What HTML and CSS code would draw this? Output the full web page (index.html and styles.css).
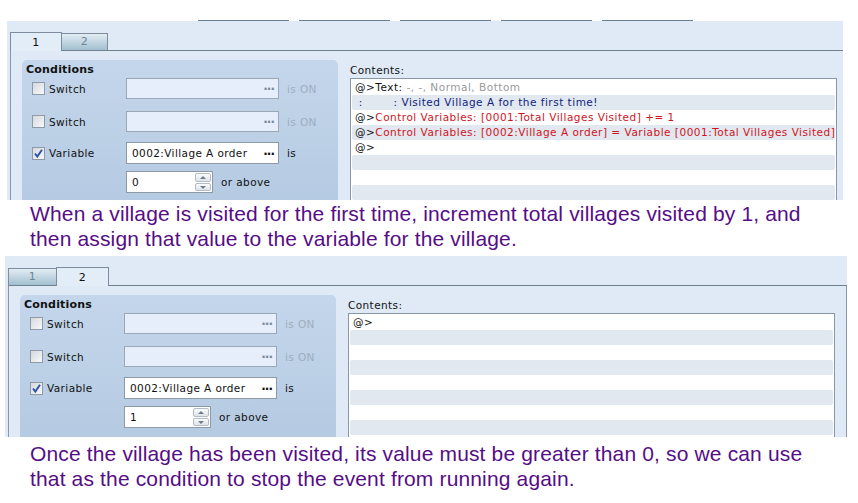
FILE: index.html
```html
<!DOCTYPE html>
<html lang="en">
<head>
    <meta charset="UTF-8">
    <meta name="viewport" content="width=device-width, initial-scale=1.0">
    <title>Village Visited Event</title>
    <link rel="stylesheet" href="styles.css">
</head>
<body>
    <div class="btn-strip">
        <span></span><span></span><span></span><span></span><span></span>
    </div>

    <section class="panel panel-one">
        <div class="tabs">
            <div class="tab active tab-wide">1</div>
            <div class="tab tab-narrow">2</div>
        </div>
        <div class="tab-body">
            <div class="conditions">
                <div class="cond-title">Conditions</div>
                <div class="cond-row row-a">
                    <span class="check"></span><span class="cond-label">Switch</span>
                    <div class="picker disabled"><span class="picker-text"></span><span class="dots">&middot;&middot;&middot;</span></div>
                    <span class="suffix muted">is ON</span>
                </div>
                <div class="cond-row row-b">
                    <span class="check"></span><span class="cond-label">Switch</span>
                    <div class="picker disabled"><span class="picker-text"></span><span class="dots">&middot;&middot;&middot;</span></div>
                    <span class="suffix muted">is ON</span>
                </div>
                <div class="cond-row row-c">
                    <span class="check checked"><svg width="11" height="11" viewBox="0 0 11 11"><path d="M2 5.5 L4.3 8.5 L9 1.8" fill="none" stroke="#2f55a8" stroke-width="2"/></svg></span><span class="cond-label">Variable</span>
                    <div class="picker"><span class="picker-text">0002:Village A order</span><span class="dots">&middot;&middot;&middot;</span></div>
                    <span class="suffix">is</span>
                </div>
                <div class="cond-row row-d">
                    <div class="spin">
                        <span class="spin-value">0</span>
                        <span class="spin-btns"><i class="up"></i><i class="down"></i></span>
                    </div>
                    <span class="suffix">or above</span>
                </div>
            </div>
            <div class="contents">
                <div class="contents-label">Contents:</div>
                <div class="event-list">
                    <div class="line"><span class="cmd">@&gt;Text: </span><span class="grey">-, -, Normal, Bottom</span></div>
                    <div class="line navy"> :        : Visited Village A for the first time!</div>
                    <div class="line"><span class="cmd">@&gt;</span><span class="red">Control Variables: [0001:Total Villages Visited] += 1</span></div>
                    <div class="line"><span class="cmd">@&gt;</span><span class="red">Control Variables: [0002:Village A order] = Variable [0001:Total Villages Visited]</span></div>
                    <div class="line"><span class="cmd">@&gt;</span></div>
                    <div class="line"></div>
                    <div class="line"></div>
                    <div class="line"></div>
                </div>
            </div>
        </div>
    </section>

    <p class="note note-one">When a village is visited for the first time, increment total villages visited by 1, and<br>then assign that value to the variable for the village.</p>

    <section class="panel panel-two">
        <div class="tabs">
            <div class="tab tab-first">1</div>
            <div class="tab active tab-second">2</div>
        </div>
        <div class="tab-body">
            <div class="conditions">
                <div class="cond-title">Conditions</div>
                <div class="cond-row row-a">
                    <span class="check"></span><span class="cond-label">Switch</span>
                    <div class="picker disabled"><span class="picker-text"></span><span class="dots">&middot;&middot;&middot;</span></div>
                    <span class="suffix muted">is ON</span>
                </div>
                <div class="cond-row row-b">
                    <span class="check"></span><span class="cond-label">Switch</span>
                    <div class="picker disabled"><span class="picker-text"></span><span class="dots">&middot;&middot;&middot;</span></div>
                    <span class="suffix muted">is ON</span>
                </div>
                <div class="cond-row row-c">
                    <span class="check checked"><svg width="11" height="11" viewBox="0 0 11 11"><path d="M2 5.5 L4.3 8.5 L9 1.8" fill="none" stroke="#2f55a8" stroke-width="2"/></svg></span><span class="cond-label">Variable</span>
                    <div class="picker"><span class="picker-text">0002:Village A order</span><span class="dots">&middot;&middot;&middot;</span></div>
                    <span class="suffix">is</span>
                </div>
                <div class="cond-row row-d">
                    <div class="spin">
                        <span class="spin-value">1</span>
                        <span class="spin-btns"><i class="up"></i><i class="down"></i></span>
                    </div>
                    <span class="suffix">or above</span>
                </div>
            </div>
            <div class="contents">
                <div class="contents-label">Contents:</div>
                <div class="event-list">
                    <div class="line"><span class="cmd">@&gt;</span></div>
                    <div class="line"></div>
                    <div class="line"></div>
                    <div class="line"></div>
                    <div class="line"></div>
                    <div class="line"></div>
                    <div class="line"></div>
                    <div class="line"></div>
                </div>
            </div>
        </div>
    </section>

    <p class="note note-two">Once the village has been visited, its value must be greater than 0, so we can use<br>that as the condition to stop the event from running again.</p>
</body>
</html>
```

FILE: styles.css
```css
body {
    margin: 0;
    background: #fff;
    font-family: "DejaVu Sans", Verdana, sans-serif;
    font-size: 10.5px;
    letter-spacing: 0.4px;
    color: #111;
}
.btn-strip {
    display: flex;
    align-items: flex-end;
    gap: 10px;
    height: 21px;
    padding-left: 198px;
}
.btn-strip span {
    width: 91px;
    height: 1px;
    background: #6b7e91;
}
.panel {
    background: #dfeaf6;
    padding-top: 11px;
    overflow: hidden;
    box-sizing: border-box;
}
.panel-one {
    margin-left: 7px;
    width: 836px;
    height: 179px;
}
.panel-two {
    margin-left: 5px;
    width: 842px;
    height: 181px;
}
.tabs {
    display: flex;
    align-items: flex-end;
    height: 18px;
    padding-left: 3px;
}
.tab {
    box-sizing: border-box;
    height: 17px;
    border: 1px solid #7d8d9d;
    border-bottom: none;
    background: linear-gradient(#e2ecf3, #a2bfcf);
    color: #6a8596;
    font-size: 11px;
    line-height: 16px;
    text-align: center;
}
.tab.active {
    position: relative;
    z-index: 1;
    height: 19px;
    margin-bottom: -1px;
    background: #e3edf8;
    color: #111;
    line-height: 19px;
}
.tab-wide { width: 52px; }
.tab-narrow { width: 47px; margin-left: -1px; }
.tab-first { width: 49px; }
.tab-second { width: 53px; margin-left: -1px; }
.tab-body {
    display: flex;
    margin-left: 3px;
    height: 100%;
    border-top: 1px solid #6f8091;
    border-left: 1px solid #8797a7;
    padding: 9px 0 0 11px;
}
.panel-two .tab-body {
    border-right: 1px solid #8797a7;
}
.conditions {
    width: 316px;
    height: 160px;
    padding: 3px 0 0 4px;
    box-sizing: border-box;
    border-radius: 5px 5px 0 0;
    background: linear-gradient(#c4d6eb, #b3c9e1);
}
.cond-title {
    font-weight: bold;
    font-size: 11px;
    line-height: 14px;
    letter-spacing: 0.2px;
    color: #111;
}
.cond-row {
    display: flex;
    align-items: center;
    height: 21px;
    padding-left: 6px;
}
.row-a { margin-top: 1px; margin-bottom: 12px; }
.row-b { margin-bottom: 10px; }
.row-c { height: 22px; margin-bottom: 7px; }
.row-d { height: 22px; padding-left: 100px; }
.check {
    box-sizing: border-box;
    width: 13px;
    height: 13px;
    border: 1px solid #8e9aa8;
    background: linear-gradient(135deg, #d6d9dd, #f7f8f9);
    display: flex;
    align-items: center;
    justify-content: center;
}
.cond-label {
    width: 77px;
    margin-left: 4px;
    color: #111;
}
.picker {
    box-sizing: border-box;
    width: 153px;
    height: 100%;
    display: flex;
    align-items: center;
    justify-content: space-between;
    padding: 0 4px 0 5px;
    border: 1px solid #8c9aa8;
    background: #fff;
}
.picker.disabled {
    background: #e5eefa;
    border-color: #9aa8b5;
}
.dots {
    font-weight: bold;
    font-size: 12px;
    letter-spacing: -1px;
    color: #111;
    margin-top: 1px;
}
.picker.disabled .dots {
    color: #7a8a9a;
}
.suffix {
    margin-left: 8px;
    color: #111;
}
.suffix.muted {
    color: #9dadbe;
}
.spin {
    box-sizing: border-box;
    width: 87px;
    height: 100%;
    display: flex;
    align-items: center;
    justify-content: space-between;
    padding: 0 1px 0 5px;
    border: 1px solid #8c9aa8;
    background: #fff;
}
.spin-btns {
    display: flex;
    flex-direction: column;
    gap: 1px;
    width: 16px;
    height: 18px;
}
.spin-btns i {
    flex: 1;
    position: relative;
    border: 1px solid #b4bcc6;
    border-radius: 2px;
    background: linear-gradient(#fafbfc, #dfe4ea);
}
.spin-btns i::after {
    content: "";
    position: absolute;
    left: 4px;
    top: 2px;
    border-left: 3px solid transparent;
    border-right: 3px solid transparent;
}
.spin-btns .up::after {
    border-bottom: 3px solid #6c7c8c;
}
.spin-btns .down::after {
    border-top: 3px solid #6c7c8c;
}
.contents {
    margin-left: 12px;
    padding-top: 3px;
    width: 487px;
}
.contents-label {
    line-height: 14px;
    color: #111;
}
.event-list {
    margin-top: 1px;
    height: 200px;
    padding: 1px 1px 0;
    border: 1px solid #8797a7;
    border-bottom: none;
    background: #fff;
}
.line {
    height: 15px;
    line-height: 15px;
    padding-left: 3px;
    white-space: pre;
    overflow: hidden;
    letter-spacing: 0.5px;
}
.line:nth-child(even) {
    background: #e2e8ef;
    border-radius: 2px;
}
.cmd { color: #111; }
.grey { color: #9a9a9a; }
.navy { color: #112480; }
.red { color: #d0141e; }
.note {
    margin: 0;
    padding-left: 30px;
    font-family: "Liberation Sans", Arial, sans-serif;
    font-size: 21px;
    letter-spacing: 0.15px;
    line-height: 25px;
    color: #560d86;
}
.note-one {
    padding-top: 1px;
    height: 55px;
}
.note-two {
    padding-top: 4px;
}
```
